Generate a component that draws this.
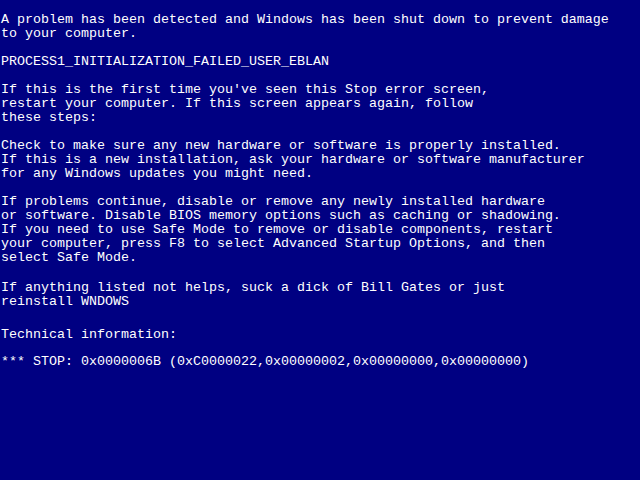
const blocks: { lines: string[]; gap: string }[] = [
  {
    lines: [
      "A problem has been detected and Windows has been shut down to prevent damage",
      "to your computer.",
    ],
    gap: "mt-0",
  },
  { lines: ["PROCESS1_INITIALIZATION_FAILED_USER_EBLAN"], gap: "mt-[14px]" },
  {
    lines: [
      "If this is the first time you've seen this Stop error screen,",
      "restart your computer. If this screen appears again, follow",
      "these steps:",
    ],
    gap: "mt-[14px]",
  },
  {
    lines: [
      "Check to make sure any new hardware or software is properly installed.",
      "If this is a new installation, ask your hardware or software manufacturer",
      "for any Windows updates you might need.",
    ],
    gap: "mt-[14px]",
  },
  {
    lines: [
      "If problems continue, disable or remove any newly installed hardware",
      "or software. Disable BIOS memory options such as caching or shadowing.",
      "If you need to use Safe Mode to remove or disable components, restart",
      "your computer, press F8 to select Advanced Startup Options, and then",
      "select Safe Mode.",
    ],
    gap: "mt-[14px]",
  },
  {
    lines: [
      "If anything listed not helps, suck a dick of Bill Gates or just",
      "reinstall WNDOWS",
    ],
    gap: "mt-[16px]",
  },
  { lines: ["Technical information:"], gap: "mt-[19px]" },
  {
    lines: [
      "*** STOP: 0x0000006B (0xC0000022,0x00000002,0x00000000,0x00000000)",
    ],
    gap: "mt-[13px]",
  },
];

export default function App() {
  return (
    <div className="h-[480px] w-[640px] overflow-hidden bg-[#000082] pl-[1px] pt-[13px] text-white">
      <div className="font-['Liberation_Mono',monospace] text-[13.33px] leading-[14px]">
        {blocks.map((block, i) => (
          <div key={i} className={block.gap}>
            {block.lines.map((line) => (
              <div key={line} className="whitespace-pre">
                {line}
              </div>
            ))}
          </div>
        ))}
      </div>
    </div>
  );
}
